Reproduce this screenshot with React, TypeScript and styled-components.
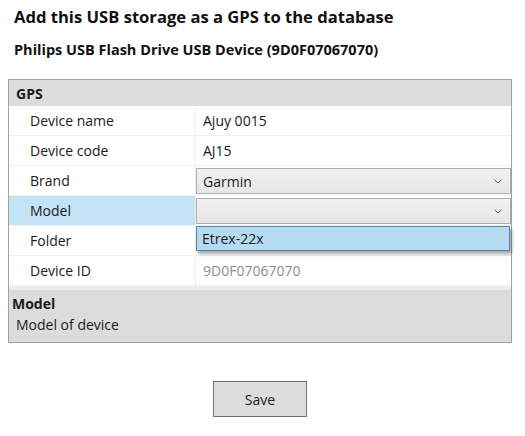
import styled, { createGlobalStyle } from "styled-components";

const GlobalStyle = createGlobalStyle`
  html, body {
    margin: 0;
    padding: 0;
    background: #ffffff;
  }
  body {
    font-family: "Open Sans", "Noto Sans", sans-serif;
    color: #1a1a1a;
  }
`;

const Page = styled.div`
  width: 525px;
  height: 436px;
  box-sizing: border-box;
  padding: 6px 13px 0 8px;
  display: flex;
  flex-direction: column;
`;

const Title = styled.h1`
  margin: 0 0 0 6px;
  font-size: 16.6px;
  font-weight: 700;
  line-height: 22px;
  color: #111;
`;

const Subtitle = styled.h2`
  margin: 13px 0 0 6px;
  font-size: 14.5px;
  font-weight: 700;
  line-height: 18px;
  color: #111;
`;

const Panel = styled.div`
  margin-top: 20px;
  width: 504px;
  box-sizing: border-box;
  border: 1px solid #a0a0a0;
  display: flex;
  flex-direction: column;
  position: relative;
`;

const CategoryHeader = styled.div`
  height: 26px;
  background: #dcdcdc;
  font-size: 14px;
  font-weight: 700;
  display: flex;
  align-items: center;
  padding-left: 7px;
`;

const Row = styled.div`
  display: grid;
  grid-template-columns: 187px 1fr;
  height: 30px;
  box-sizing: border-box;
  border-bottom: 1px solid #f0f0f0;
  font-size: 14px;
`;

const Label = styled.div<{ $selected?: boolean }>`
  display: flex;
  align-items: center;
  padding-left: 21px;
  background: ${(p) => (p.$selected ? "#c5e3f6" : "#ffffff")};
  border-right: 1px solid #f0f0f0;
`;

const Value = styled.div<{ $muted?: boolean }>`
  display: flex;
  align-items: center;
  padding-left: 7px;
  color: ${(p) => (p.$muted ? "#8c8c8c" : "#1a1a1a")};
`;

const ComboCell = styled.div`
  display: flex;
  align-items: stretch;
  padding: 2px 0 1px 0;
`;

const Combo = styled.div`
  flex: 1;
  display: flex;
  align-items: center;
  justify-content: space-between;
  padding: 0 8px 0 6px;
  background: linear-gradient(#f2f2f2, #e6e6e6);
  border: 1px solid #adadad;
  font-size: 14px;
`;

const DropDown = styled.div`
  position: absolute;
  left: 187px;
  top: 146px;
  width: 314px;
  height: 25px;
  box-sizing: border-box;
  background: #b5dbf3;
  border: 1px solid #4f86ac;
  box-shadow: 2px 3px 3px rgba(0, 0, 0, 0.35);
  display: flex;
  align-items: center;
  padding-left: 5px;
  font-size: 14px;
  color: #1a1a1a;
`;

const Splitter = styled.div`
  height: 4px;
  background: #ececec;
`;

const Description = styled.div`
  background: #dcdcdc;
  height: 52px;
  display: flex;
  flex-direction: column;
  padding: 4px 0 0 3px;
  box-sizing: border-box;
  font-size: 14px;
`;

const DescTitle = styled.div`
  font-weight: 700;
  line-height: 20px;
`;

const DescText = styled.div`
  padding-left: 4px;
  line-height: 22px;
`;

const Footer = styled.div`
  width: 504px;
  display: flex;
  justify-content: center;
  margin-top: 38px;
`;

const Button = styled.button`
  width: 94px;
  height: 36px;
  background: #dddddd;
  border: 1px solid #707070;
  font-family: inherit;
  font-size: 14px;
  color: #1a1a1a;
  padding: 0;
`;

function Chevron() {
  return (
    <svg width="8" height="5" viewBox="0 0 8 5">
      <path d="M0.5 0.5 L4 4 L7.5 0.5" fill="none" stroke="#606060" strokeWidth="1" />
    </svg>
  );
}

export default function App() {
  return (
    <>
      <GlobalStyle />
      <Page>
        <Title>Add this USB storage as a GPS to the database</Title>
        <Subtitle>Philips USB Flash Drive USB Device (9D0F07067070)</Subtitle>
        <Panel>
          <CategoryHeader>GPS</CategoryHeader>
          <Row>
            <Label>Device name</Label>
            <Value>Ajuy 0015</Value>
          </Row>
          <Row>
            <Label>Device code</Label>
            <Value>AJ15</Value>
          </Row>
          <Row>
            <Label>Brand</Label>
            <ComboCell>
              <Combo>
                Garmin
                <Chevron />
              </Combo>
            </ComboCell>
          </Row>
          <Row>
            <Label $selected>Model</Label>
            <ComboCell>
              <Combo>
                <span />
                <Chevron />
              </Combo>
            </ComboCell>
          </Row>
          <Row>
            <Label>Folder</Label>
            <Value />
          </Row>
          <Row>
            <Label>Device ID</Label>
            <Value $muted>9D0F07067070</Value>
          </Row>
          <Splitter />
          <Description>
            <DescTitle>Model</DescTitle>
            <DescText>Model of device</DescText>
          </Description>
          <DropDown>Etrex-22x</DropDown>
        </Panel>
        <Footer>
          <Button>Save</Button>
        </Footer>
      </Page>
    </>
  );
}
